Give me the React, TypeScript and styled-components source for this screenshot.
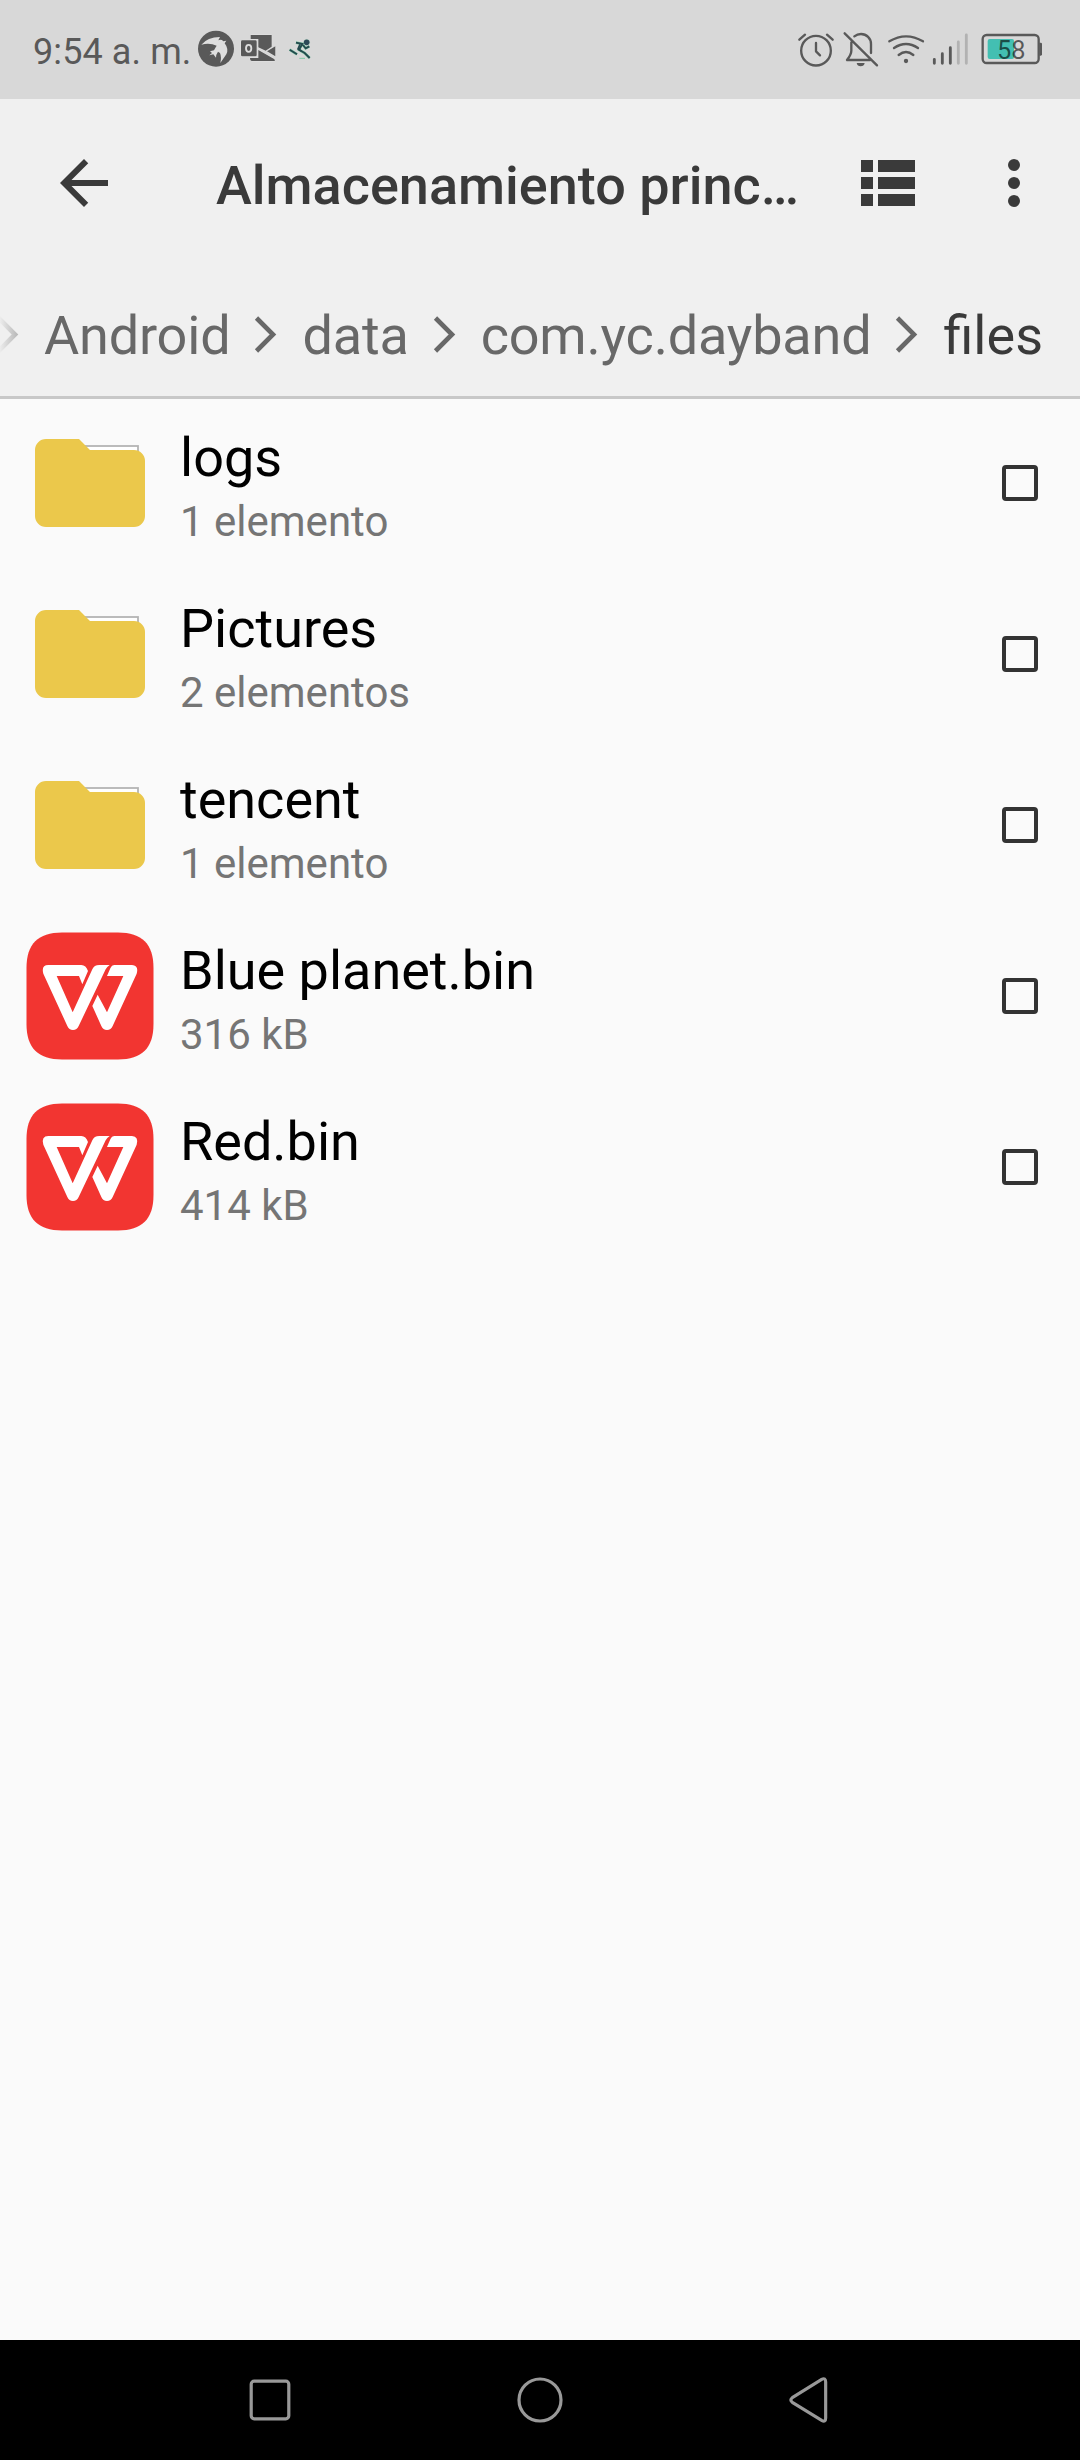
import React from "react";
import styled, { createGlobalStyle } from "styled-components";

const Global = createGlobalStyle`
  *, *::before, *::after { box-sizing: border-box; }
  body { margin: 0; background: #fafafa; font-family: Roboto, "Noto Sans", sans-serif; }
  svg { display: block; flex: none; }
`;

const Screen = styled.div`
  width: 1080px;
  height: 2460px;
  display: flex;
  flex-direction: column;
  background: #fafafa;
  overflow: hidden;
`;

const StatusBar = styled.div`
  height: 99px;
  flex: none;
  display: flex;
  justify-content: space-between;
  padding: 25px 34px 0 0;
  background: #d8d8d8;
`;

const StatusGroup = styled.div`
  display: flex;
  align-items: flex-start;
`;

const Clock = styled.span`
  width: 198px;
  padding: 6px 0 0 33px;
  font-size: 36px;
  line-height: 42px;
  letter-spacing: 0.1px;
  color: #595959;
  white-space: nowrap;
`;

const Header = styled.header`
  height: 300px;
  flex: none;
  background: #f0f0f0;
  border-bottom: 3px solid #c8c8c8;
  display: flex;
  flex-direction: column;
`;

const Toolbar = styled.div`
  height: 168px;
  display: flex;
  align-items: center;
  padding-left: 48px;
`;

const IconButton = styled.button<{ $w: number }>`
  border: 0;
  padding: 0;
  background: none;
  flex: none;
  width: ${(p) => p.$w}px;
  height: 72px;
  display: flex;
  justify-content: center;
  align-items: center;
`;

const Title = styled.h1`
  margin: 0 0 0 96px;
  padding-top: 6px;
  flex: 1;
  font-size: 54px;
  line-height: 64px;
  font-weight: 500;
  color: #3a3a3a;
  white-space: nowrap;
`;

const Breadcrumbs = styled.nav`
  height: 129px;
  display: flex;
  align-items: center;
  justify-content: flex-end;
  padding: 9px 37px 0 0;
  overflow: hidden;
`;

const Crumb = styled.span<{ $current?: boolean }>`
  font-size: 54px;
  line-height: 64px;
  letter-spacing: ${(p) => (p.$current ? "normal" : "-0.18px")};
  color: ${(p) => (p.$current ? "#3a3a3a" : "#686868")};
  white-space: nowrap;
`;

const List = styled.ul`
  list-style: none;
  margin: 0;
  padding: 0;
  flex: 1;
`;

const Row = styled.li`
  height: 171px;
  display: flex;
  align-items: flex-start;
`;

const Thumb = styled.div`
  width: 180px;
  height: 168px;
  padding: 20px 0 0 26px;
`;

const Texts = styled.div`
  flex: 1;
  display: flex;
  flex-direction: column;
  padding-top: 27px;
`;

const Name = styled.span`
  font-size: 54px;
  line-height: 64px;
  color: #000;
`;

const Detail = styled.span`
  font-size: 42px;
  line-height: 50px;
  margin-top: 7px;
  color: #757575;
`;

const Checkbox = styled.span`
  width: 36px;
  height: 36px;
  margin: 66px 42px 0 0;
  border: 4px solid #333;
  border-radius: 4px;
`;

const NavBar = styled.div`
  height: 120px;
  flex: none;
  background: #000;
  display: flex;
  justify-content: center;
  align-items: center;
`;

const NavButton = styled.div`
  width: 270px;
  display: flex;
  justify-content: center;
`;

const INK = "#595959";

const BirdIcon = () => (
  <svg width="40" height="50" viewBox="24 0 120 150">
    <circle cx="78" cy="71" r="54" fill={INK} />
    <path
      d="M34 59Q52 37 90 36L85 46Q94 42 100 49L109 47L104 55Q117 72 109 88L91 114Q95 96 90 84L84 80Q78 88 78 98L70 88L58 91L66 84L60 79L72 76Q76 68 80 62Q60 53 34 59Z"
      fill="#dedede"
    />
  </svg>
);

const OutlookIcon = () => (
  <svg width="48" height="50" viewBox="144 0 144 150">
    <g fill={INK} stroke="#e4e4e4" strokeWidth="3" paintOrder="stroke">
      <path d="M182 30H245V65L227 77L205 67V42H182Z" />
      <path d="M231 79L256 64V94Z" />
      <path d="M205 75L251 101Q256 104 254 108H186Q180 108 180 99H205Z" />
      <rect x="153" y="46" width="47" height="48" rx="4" />
    </g>
    <ellipse cx="176" cy="70" rx="8" ry="10.500" fill="none" stroke="#dedede" strokeWidth="5.500" />
  </svg>
);

const SKIER = "M318 53L337 57L327 74L344 84L359 99M299 74L321 88M339 60L347 70L358 64";

const SkierIcon = () => (
  <svg width="30" height="50" viewBox="288 0 90 150" fill="none">
    <g stroke="#7cc9a4">
      <path d={SKIER} strokeWidth="8" />
      <path d="M328 100H345" strokeWidth="3" />
      <circle cx="350" cy="52" r="9" />
    </g>
    <path d={SKIER} stroke="#24494e" strokeWidth="5.500" />
    <path d="M330 58L324 72L334 78" stroke="#24494e" strokeWidth="5" />
    <circle cx="350" cy="52" r="8.500" fill="#2b4a57" />
  </svg>
);

const AlarmIcon = () => (
  <svg width="44" height="50" viewBox="18 0 132 150" fill="none" stroke={INK} strokeWidth="7" strokeLinecap="round" strokeLinejoin="round">
    <circle cx="78" cy="77" r="44.500" />
    <path d="M78 54V79L90 91M28 44L45 29M111 29L128 44" />
  </svg>
);

const MutedBellIcon = () => (
  <svg width="43" height="50" viewBox="150 0 129 150" fill="none" stroke={INK} strokeWidth="7" strokeLinecap="round" strokeLinejoin="round">
    <path d="M193 34Q202 27 213 27A30 30 0 0 1 243 57V84M184 52V77Q184 88 171 105H241M164 25L261 121" />
    <path d="M200 114H224Q222 124 212 124T200 114Z" fill={INK} stroke="none" />
  </svg>
);

const WifiIcon = () => (
  <svg width="46" height="50" viewBox="279 0 138 150" fill="none" stroke={INK} strokeWidth="7" strokeLinecap="round">
    <path d="M298 49Q348 19 399 49M312 69Q348 45 384 69M326 90Q348 72 370 90" />
    <circle cx="348" cy="108" r="6.500" fill={INK} stroke="none" />
  </svg>
);

const SignalIcon = () => (
  <svg width="45" height="50" viewBox="417 0 135 150" strokeWidth="8.500" strokeLinecap="round">
    <path d="M433 103V115M457 86V115M481 68V115" stroke={INK} />
    <path d="M505 51V115M529 30V115" stroke="#b2b2b2" />
  </svg>
);

const BatteryIcon = () => (
  <svg width="72" height="50" viewBox="552 0 216 150">
    <rect x="593" y="42" width="79" height="60" rx="6" fill="#43bfb2" />
    <rect x="578" y="30" width="168" height="84" rx="12" fill="none" stroke={INK} strokeWidth="7" />
    <path d="M748 53H752Q756 53 756 57V88Q756 92 752 92H748Z" fill={INK} />
    <text x="621" y="101" fontSize="76" fontFamily="Roboto, sans-serif" fill="#000" fillOpacity=".6">
      58
    </text>
  </svg>
);

const Chevron = ({ faded = false }: { faded?: boolean }) => (
  <svg width="72" height="54" viewBox="0 0 72 54">
    <defs>
      <linearGradient id="fade" gradientUnits="userSpaceOnUse" x1="28" y1="0" x2="47" y2="0">
        <stop offset="0" stopColor="#ececec" />
        <stop offset="1" stopColor="#b4b4b4" />
      </linearGradient>
    </defs>
    <path d="M26.500 9L43 25.500L26.500 42" fill="none" stroke={faded ? "url(#fade)" : "#686868"} strokeWidth="4.600" />
  </svg>
);

const Folder = () => (
  <svg width="128" height="128" viewBox="26 419 128 128">
    <rect x="70" y="446" width="68" height="30" fill="#fff" stroke="#b4b4b4" strokeWidth="1.800" />
    <path
      d="M46 439H79L90 450H134A11 11 0 0 1 145 461V516A11 11 0 0 1 134 527H46A11 11 0 0 1 35 516V450A11 11 0 0 1 46 439Z"
      fill="#ebc84b"
    />
  </svg>
);

const WpsLogo = () => (
  <svg width="128" height="128" viewBox="0 0 128 128">
    <path
      d="M36 .5H92C116 .5 127.500 12 127.500 36V92C127.500 116 116 127.500 92 127.500H36C12 127.500 .5 116 .5 92V36C.5 12 12 .5 36 .5Z"
      fill="#f23531"
    />
    <g fill="#fff" transform="translate(-6 -7) scale(.33333)">
      <path d="M85 120H184Q198 120 204 138L187 178L177 153H110L158 262L217 133Q222 120 238 120H269Q261 125 257 133L176 303Q171 315 159 315Q147 315 142 303L70 146Q63 120 85 120Z" />
      <path d="M284 120H336Q357 122 350 146L278 303Q273 315 261 315Q249 315 244 303L217 243L233 209L261 262L310 153H261L271 130Q275 120 284 120Z" />
    </g>
  </svg>
);

const files = [
  { name: "logs", detail: "1 elemento", folder: true },
  { name: "Pictures", detail: "2 elementos", folder: true },
  { name: "tencent", detail: "1 elemento", folder: true },
  { name: "Blue planet.bin", detail: "316 kB", folder: false },
  { name: "Red.bin", detail: "414 kB", folder: false },
];

export default function App() {
  return (
    <Screen>
      <Global />
      <StatusBar>
        <StatusGroup>
          <Clock>9:54 a. m.</Clock>
          <BirdIcon />
          <OutlookIcon />
          <SkierIcon />
        </StatusGroup>
        <StatusGroup>
          <AlarmIcon />
          <MutedBellIcon />
          <WifiIcon />
          <SignalIcon />
          <BatteryIcon />
        </StatusGroup>
      </StatusBar>
      <Header>
        <Toolbar>
          <IconButton $w={72} aria-label="Atrás">
            <svg width="72" height="72" viewBox="0 0 24 24">
              <path fill="#3a3a3a" d="M20 11H7.830l5.590-5.590L12 4l-8 8 8 8 1.410-1.410L7.830 13H20z" />
            </svg>
          </IconButton>
          <Title>Almacenamiento princ…</Title>
          <IconButton $w={120} aria-label="Vista">
            <svg width="54" height="46" viewBox="0 0 54 46" fill="#3a3a3a">
              <path d="M0 0h12v12H0zM17 0h37v12H17zM0 17h12v12H0zM17 17h37v12H17zM0 34h12v12H0zM17 34h37v12H17z" />
            </svg>
          </IconButton>
          <IconButton $w={132} aria-label="Más">
            <svg width="12" height="48" viewBox="0 0 12 48" fill="#3a3a3a">
              <circle cx="6" cy="6" r="6" />
              <circle cx="6" cy="24" r="6" />
              <circle cx="6" cy="42" r="6" />
            </svg>
          </IconButton>
        </Toolbar>
        <Breadcrumbs>
          <Chevron faded />
          <Crumb>Android</Crumb>
          <Chevron />
          <Crumb>data</Crumb>
          <Chevron />
          <Crumb>com.yc.dayband</Crumb>
          <Chevron />
          <Crumb $current>files</Crumb>
        </Breadcrumbs>
      </Header>
      <List>
        {files.map((f) => (
          <Row key={f.name}>
            <Thumb>{f.folder ? <Folder /> : <WpsLogo />}</Thumb>
            <Texts>
              <Name>{f.name}</Name>
              <Detail>{f.detail}</Detail>
            </Texts>
            <Checkbox />
          </Row>
        ))}
      </List>
      <NavBar>
        <NavButton>
          <svg width="42" height="42" viewBox="0 0 42 42" fill="none" stroke="#999" strokeWidth="3.200">
            <rect x="2.200" y="2.200" width="37.600" height="37.600" rx="3" />
          </svg>
        </NavButton>
        <NavButton>
          <svg width="46" height="46" viewBox="0 0 46 46" fill="none" stroke="#999" strokeWidth="3.200">
            <circle cx="23" cy="23" r="21" />
          </svg>
        </NavButton>
        <NavButton>
          <svg width="80" height="80" viewBox="0 0 240 240" fill="none" stroke="#999" strokeWidth="9.500">
            <path d="M155 58Q167 52 167 66V174Q167 188 155 181L67 127Q58 120 67 113Z" />
          </svg>
        </NavButton>
      </NavBar>
    </Screen>
  );
}
